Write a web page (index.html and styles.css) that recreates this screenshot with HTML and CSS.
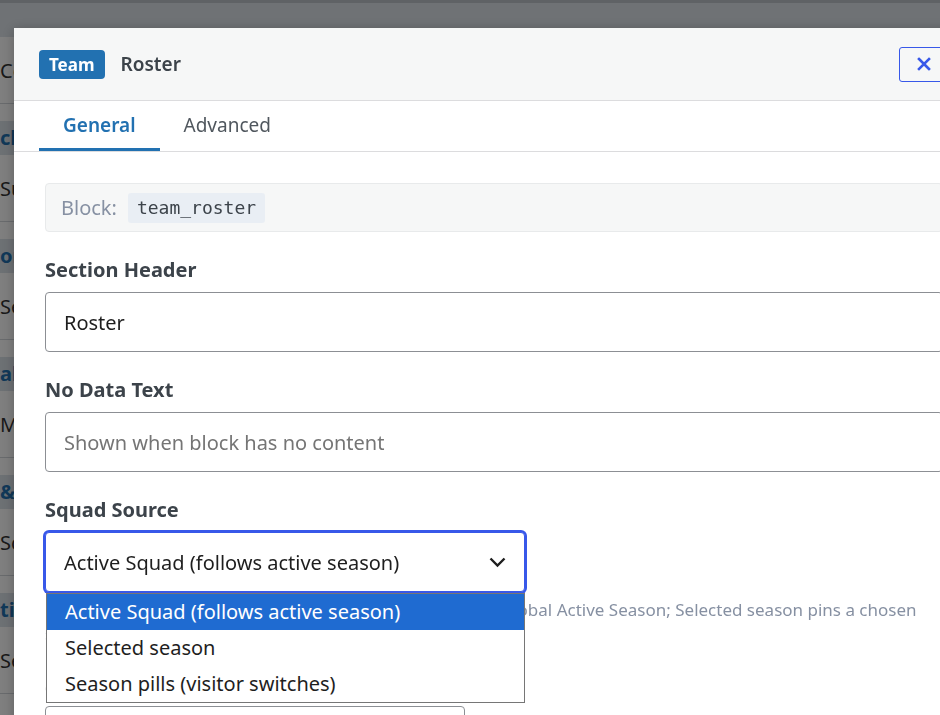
FILE: index.html
```html
<!DOCTYPE html>
<html lang="en">
<head>
  <meta charset="UTF-8">
  <meta name="viewport" content="width=device-width, initial-scale=1.0">
  <title>Team Roster</title>
  <link rel="stylesheet" href="styles.css">
</head>
<body>
  <!-- admin list behind the dialog -->
  <div class="admin">
    <div class="admin-top"></div>
    <div class="row">Content</div>
    <div class="group">
      <div class="group-head">checks</div>
      <div class="row">Summary</div>
    </div>
    <div class="group">
      <div class="group-head">ordering</div>
      <div class="row">Season</div>
    </div>
    <div class="group">
      <div class="group-head">alerts</div>
      <div class="row">Matches</div>
    </div>
    <div class="group">
      <div class="group-head">&amp; Contacts</div>
      <div class="row">Scores</div>
    </div>
    <div class="group">
      <div class="group-head">tistics</div>
      <div class="row">Seats</div>
    </div>
  </div>

  <div class="backdrop"></div>

  <div class="modal">
    <div class="modal-head">
      <span class="badge">Team</span>
      <span class="modal-title">Roster</span>
      <button class="close" aria-label="Close">
        <svg width="14" height="14" viewBox="0 0 14 14"><path d="M2 2l10 10M12 2L2 12" stroke="#3858e9" stroke-width="2.6" stroke-linecap="square"/></svg>
      </button>
    </div>

    <div class="tabs">
      <button class="tab active">General</button>
      <button class="tab">Advanced</button>
    </div>

    <div class="modal-body">
      <div class="block-id">Block: <code>team_roster</code></div>

      <div class="field">
        <label>Section Header</label>
        <input class="input" type="text" value="Roster">
      </div>

      <div class="field">
        <label>No Data Text</label>
        <input class="input" type="text" placeholder="Shown when block has no content">
      </div>

      <div class="field">
        <label>Squad Source</label>
        <div class="select-wrap">
          <div class="select focused">
            <span>Active Squad (follows active season)</span>
            <svg width="19" height="12" viewBox="0 0 19 12"><path d="M2.5 2.5l7 7 7-7" fill="none" stroke="#1e1e1e" stroke-width="2.4"/></svg>
          </div>
          <ul class="options">
            <li class="picked">Active Squad (follows active season)</li>
            <li>Selected season</li>
            <li>Season pills (visitor switches)</li>
          </ul>
        </div>
        <p class="help">Pick where the players come from. Active Squad uses the global Active Season; Selected season pins a chosen season; pills let visitors switch.</p>
      </div>

      <div class="field">
        <label>Season</label>
        <div class="select short"><span>2024/25</span></div>
      </div>
    </div>
  </div>
</body>
</html>
```

FILE: styles.css
```css
* {
  box-sizing: border-box;
}
body {
  margin: 0;
  height: 715px;
  overflow: hidden;
  font-family: "Noto Sans", "Open Sans", sans-serif;
  color: #1e1e1e;
  background: #fff;
}

/* page under the dialog */
.admin {
  font-size: 20px;
  color: #333;
}
.admin-top {
  height: 37px;
  background: #dee4ea;
  border-top: 3px solid #bec4cb;
}
.row {
  height: 67px;
  line-height: 67px;
  border-bottom: 1px solid #d2d6db;
  white-space: nowrap;
}
.group {
  padding-top: 17px;
}
.group-head {
  height: 34px;
  line-height: 34px;
  background: #dbe2e9;
  color: #2271b1;
  font-weight: 700;
  white-space: nowrap;
}
.backdrop {
  position: fixed;
  inset: 0;
  background: rgba(0, 0, 0, 0.5);
}

/* dialog */
.modal {
  position: fixed;
  left: 14px;
  top: 28px;
  width: 960px;
  height: 760px;
  background: #fff;
  box-shadow: 0 2px 12px rgba(0, 0, 0, 0.25);
}
.modal-head {
  height: 73px;
  display: flex;
  align-items: center;
  padding: 0 26px 0 25px;
  background: #f6f7f7;
  border-bottom: 1px solid #dcdcde;
}
.badge {
  background: #2271b1;
  color: #fff;
  font-weight: 700;
  font-size: 17px;
  line-height: 29px;
  padding: 0 10px;
  border-radius: 4px;
}
.modal-title {
  margin-left: 16px;
  font-size: 19px;
  font-weight: 600;
  color: #3c434a;
}
.close {
  margin-left: auto;
  width: 49px;
  height: 35px;
  border: 1px solid #3858e9;
  border-radius: 3px;
  background: transparent;
  display: flex;
  align-items: center;
  justify-content: center;
  padding: 0;
}

.tabs {
  display: flex;
  padding-left: 25px;
  border-bottom: 1px solid #dcdcde;
}
.tab {
  font: inherit;
  font-size: 19px;
  color: #50575e;
  background: none;
  border: none;
  border-bottom: 3px solid transparent;
  padding: 0 24px;
  height: 50px;
}
.tab.active {
  color: #2271b1;
  font-weight: 600;
  border-bottom-color: #2271b1;
}

.modal-body {
  padding: 31px 31px;
}
.block-id {
  height: 49px;
  display: flex;
  align-items: center;
  gap: 11px;
  padding: 0 15px;
  background: #f6f7f7;
  border: 1px solid #e8eaeb;
  border-radius: 4px;
  font-size: 20px;
  color: #8791a3;
}
.block-id code {
  font-family: "DejaVu Sans Mono", "Liberation Mono", monospace;
  font-size: 18px;
  color: #3c434a;
  background: #e9eef4;
  border-radius: 3px;
  padding: 0 9px;
  line-height: 30px;
}

.field {
  margin-top: 25px;
}
.field label {
  display: block;
  font-size: 20px;
  font-weight: 700;
  color: #3c434a;
  line-height: 26px;
  margin-bottom: 9px;
}
.input {
  display: block;
  width: 100%;
  height: 60px;
  padding: 0 18px;
  font: inherit;
  font-size: 20px;
  color: #1e1e1e;
  border: 1px solid #8c8f94;
  border-radius: 4px;
  background: #fff;
}
.input::placeholder {
  color: #757575;
}

.select-wrap {
  position: relative;
  width: 480px;
}
.select {
  height: 60px;
  display: flex;
  align-items: center;
  justify-content: space-between;
  padding: 0 17px 0 18px;
  font-size: 20px;
  border: 1px solid #8c8f94;
  border-radius: 4px;
  background: #fff;
}
.select.focused {
  border-color: #3858e9;
  box-shadow: 0 0 0 2px #3858e9;
}
.select.short {
  width: 420px;
}
.options {
  position: absolute;
  top: 61px;
  left: 1px;
  right: 0;
  margin: 0;
  padding: 0;
  list-style: none;
  background: #fff;
  border: 1px solid #767676;
  font-size: 20px;
  z-index: 2;
}
.options li {
  height: 36px;
  line-height: 36px;
  padding-left: 18px;
  white-space: nowrap;
}
.options li.picked {
  background: #1f6bd1;
  color: #fff;
}
.help {
  margin: 6px 0 0;
  font-size: 17px;
  line-height: 24px;
  color: #8690a2;
}
```
